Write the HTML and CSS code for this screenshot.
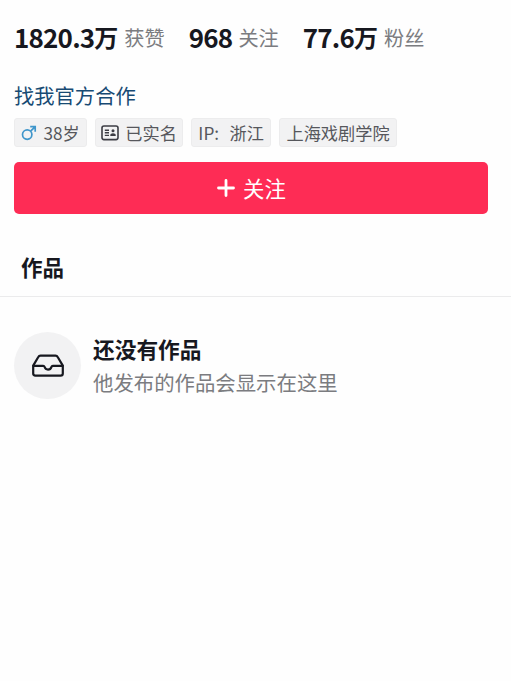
FILE: index.html
```html
<!DOCTYPE html>
<html lang="zh-CN">
<head>
  <meta charset="UTF-8">
  <title>个人主页</title>
  <link rel="stylesheet" href="styles.css">
</head>
<body>

  <div class="profile">
    <div class="stats">
      <div class="stat"><span class="num">1820.3</span><span class="unit">万</span><span class="name">获赞</span></div>
      <div class="stat"><span class="num">968</span><span class="name">关注</span></div>
      <div class="stat"><span class="num">77.6</span><span class="unit">万</span><span class="name">粉丝</span></div>
    </div>

    <a class="contact">找我官方合作</a>

    <div class="tags">
      <span class="tag">
        <svg class="male" width="16" height="16" viewBox="0 0 16 16" fill="none" stroke="#3f96cb" stroke-width="1.7">
          <circle cx="6.2" cy="9.6" r="4.7"/>
          <path d="M9.6 6.2L14 1.8M9.2 1.7H14.2V6.7"/>
        </svg>
        38岁
      </span>
      <span class="tag verified">
        <svg class="card" width="18" height="16" viewBox="0 0 18 16" fill="none" stroke="#3c3d44" stroke-width="1.6">
          <rect x="1" y="1" width="16" height="13.6" rx="2"/>
          <path d="M3.8 5.2H8M3.8 7.8H8M3.8 10.4H8" stroke-width="1.4"/>
          <circle cx="12" cy="5.8" r="1.5" fill="#3c3d44" stroke="none"/>
          <path d="M9.3 11V9.8Q9.3 8.2 12 8.2T14.7 9.8V11Z" fill="#3c3d44" stroke="none"/>
        </svg>
        已实名
      </span>
      <span class="tag"><span class="ip">IP:</span>浙江</span>
      <span class="tag">上海戏剧学院</span>
    </div>

    <button class="follow-btn">
      <svg width="18" height="18" viewBox="0 0 18 18" stroke="#fff" stroke-width="2.8" stroke-linecap="round">
        <path d="M9 1.5V16.5M1.5 9H16.5"/>
      </svg>
      <span class="follow-text">关注</span>
    </button>
  </div>

  <div class="tab-bar">
    <span class="tab">作品</span>
  </div>

  <!-- Empty state -->
  <div class="empty">
    <div class="empty-icon">
      <svg width="32" height="24" viewBox="0 0 32 24" fill="none" stroke="#17181f" stroke-width="2.2" stroke-linejoin="round" stroke-linecap="round">
        <path d="M1.2 11.6L6.3 3Q7 1.6 8.5 1.6H23.5Q25 1.6 25.7 3L30.8 11.6V19.4Q30.8 21.6 28.6 21.6H3.4Q1.2 21.6 1.2 19.4Z"/>
        <path d="M1.4 11.8H11.2Q12.2 11.8 12.5 12.8Q13.4 15.6 16 15.6T19.5 12.8Q19.8 11.8 20.8 11.8H30.6"/>
      </svg>
    </div>
    <div class="empty-text">
      <div class="empty-title">还没有作品</div>
      <div class="empty-desc">他发布的作品会显示在这里</div>
    </div>
  </div>

</body>
</html>
```

FILE: styles.css
```css
* {
  box-sizing: border-box;
}

body {
  margin: 0;
  background-color: #fefefe;
  color: #17181f;
  font-family: "Noto Sans CJK SC", sans-serif;
}

.profile {
  padding: 21px 23px 0 14px;
}

.stats {
  display: flex;
  height: 33px;
  gap: 24px;
}

.stat {
  display: flex;
  line-height: 32px;
  white-space: nowrap;
}

.num {
  font-size: 26px;
  font-weight: 700;
  letter-spacing: -0.8px;
}

.unit {
  font-size: 24px;
  font-weight: 700;
}

.name {
  margin-left: 6px;
  font-size: 20.2px;
  line-height: 34px;
  color: #7b7c80;
}

.contact {
  display: block;
  margin-top: 26px;
  height: 30px;
  line-height: 30px;
  font-size: 20.3px;
  color: #174a73;
}

.tags {
  display: flex;
  gap: 8.5px;
  margin-top: 8px;
}

.tag {
  display: flex;
  align-items: center;
  height: 29px;
  padding: 0 6px;
  border-radius: 3px;
  background-color: #f2f2f3;
  border: 1px solid #ececed;
  font-size: 17.2px;
  color: #56575c;
  white-space: nowrap;
}

.verified {
  padding: 0 5px;
}

.male {
  margin-right: 6.5px;
}

.card {
  margin-right: 6px;
}

.ip {
  margin-right: 10.5px;
}

.follow-btn {
  display: flex;
  align-items: center;
  justify-content: center;
  gap: 8px;
  width: 100%;
  height: 52px;
  margin-top: 15px;
  padding: 0 0 0 1px;
  border: none;
  border-radius: 5px;
  background-color: #fe2c55;
  color: #fff;
  font-family: inherit;
  font-size: 21.4px;
}

.follow-text {
  padding-bottom: 2px;
}

.tab-bar {
  margin-top: 37px;
  height: 46px;
  padding-left: 21px;
  border-bottom: 1px solid #ebebec;
}

.tab {
  font-size: 21.5px;
  font-weight: 700;
  line-height: 32px;
}

.empty {
  display: flex;
  align-items: center;
  gap: 12px;
  padding: 35px 14px 0;
}

.empty-icon {
  display: flex;
  align-items: center;
  justify-content: center;
  width: 67px;
  height: 67px;
  border-radius: 50%;
  background-color: #f2f2f3;
}

.empty-title {
  font-size: 21.7px;
  font-weight: 700;
  line-height: 34px;
}

.empty-desc {
  font-size: 20.4px;
  line-height: 33px;
  color: #7b7c80;
}
```
